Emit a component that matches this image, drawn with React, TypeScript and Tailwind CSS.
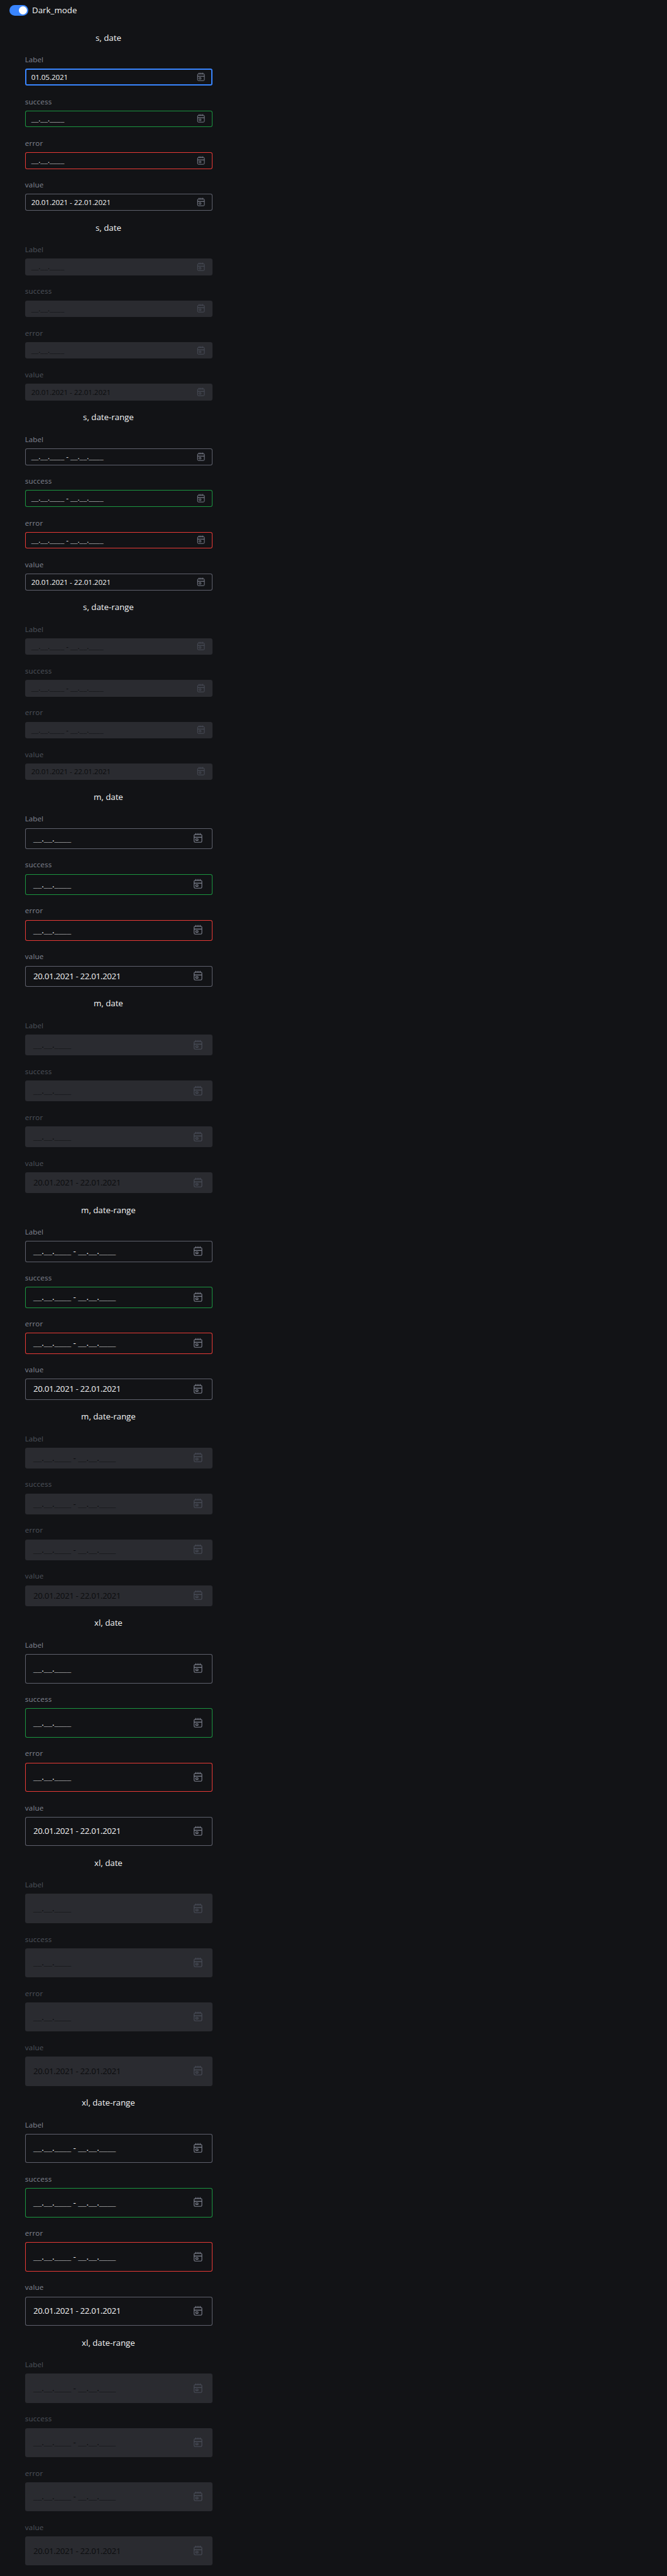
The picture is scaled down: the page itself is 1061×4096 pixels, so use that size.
import React from "react";

type Size = "s" | "m" | "xl";
type Kind = "date" | "date-range";
type Tone = "default" | "focus" | "success" | "error";

const sectionSize: Record<Size, string> = {
  s: "h-[301.82px]",
  m: "h-[328.35px]",
  xl: "h-[381.42px]",
};

const boxSize: Record<Size, string> = {
  s: "h-[26.54px] pl-[9.95px] pr-[9.53px] text-[11.605px]",
  m: "h-[33.172px] pl-[13.26px] pr-[13.26px] text-[13.2625px]",
  xl: "h-[46.438px] pl-[13.26px] pr-[13.26px] text-[13.2625px]",
};

const toneBorder: Record<Tone, string> = {
  default: "inset-ring inset-ring-[#5f616d]",
  focus: "inset-ring-2 inset-ring-[#3985ff]",
  success: "inset-ring inset-ring-[#1b9640]",
  error: "inset-ring inset-ring-[#e83a36]",
};

function CalendarIcon({ className }: { className: string }) {
  return (
    <svg viewBox="0 0 24 24" fill="none" stroke="currentColor" strokeWidth="1.35" className={className}>
      <rect x="4.6" y="4.6" width="14.8" height="15" rx="2" />
      <path d="M8 2.1v4M12 2.1v4M16 2.1v4" />
      <path d="M4.6 10h14.8" strokeWidth="1.6" />
      <rect x="7.9" y="13" width="4.2" height="3.2" rx="0.8" />
    </svg>
  );
}

function Blank({ n }: { n: number }) {
  return <span className="font-['Liberation_Serif',serif] opacity-70">{"_".repeat(n)}</span>;
}

function DateMask() {
  return (
    <>
      <Blank n={2} />.<Blank n={2} />.<Blank n={4} />
    </>
  );
}

function Field({
  label,
  size,
  kind,
  tone,
  value,
  disabled,
}: {
  label: string;
  size: Size;
  kind: Kind;
  tone: Tone;
  value?: string;
  disabled: boolean;
}) {
  const tracking = size === "s" ? "tracking-[-0.07px]" : "tracking-[-0.32px]";
  return (
    <div className="pb-[16.594px]">
      <div
        className={`h-[23.219px] text-[11.605px] leading-[18.4px] ${
          label === "Label" ? "tracking-[0.02px]" : "tracking-[0.2px]"
        } ${disabled ? "text-[#4f535d]" : "text-[#838794]"}`}
      >
        {label}
      </div>
      <div
        className={`flex items-center justify-between rounded-[3.3px] ${boxSize[size]} ${
          disabled ? "bg-[#2a2b30] text-[#0b0c0e]" : `text-[#f5f6f7] ${toneBorder[tone]}`
        }`}
      >
        <span className="whitespace-pre leading-none">
          {value ? (
            <span className={tracking}>{value}</span>
          ) : (
            <>
              <DateMask />
              {kind === "date-range" && (
                <>
                  {" - "}
                  <DateMask />
                </>
              )}
            </>
          )}
        </span>
        <CalendarIcon
          className={`shrink-0 ${size === "s" ? "size-[17.4px]" : "size-[19.894px]"} ${
            disabled ? "text-[#4a4e59]" : "text-[#7f8390]"
          }`}
        />
      </div>
    </div>
  );
}

function Section({ size, kind, disabled, focused }: { size: Size; kind: Kind; disabled: boolean; focused: boolean }) {
  const shared = { size, kind, disabled };
  return (
    <section className={sectionSize[size]}>
      <h2 className="h-[36.484px] w-[344.825px] text-center text-[13.2625px] leading-[20.4px] text-[#f5f6f7]">
        {size}, {kind}
      </h2>
      <div className="ml-[39.788px] w-[298.406px]">
        <Field {...shared} label="Label" tone={focused ? "focus" : "default"} value={focused ? "01.05.2021" : undefined} />
        <Field {...shared} label="success" tone="success" />
        <Field {...shared} label="error" tone="error" />
        <Field {...shared} label="value" tone="default" value="20.01.2021 - 22.01.2021" />
      </div>
    </section>
  );
}

const sizes: Size[] = ["s", "m", "xl"];
const kinds: Kind[] = ["date", "date-range"];

export default function App() {
  return (
    <main className="h-screen overflow-hidden bg-[#121316] font-['Open_Sans',sans-serif]">
      <header className="flex h-[49.75px] items-start gap-[6.3px] pt-[8.289px] pl-[14.92px]">
        <span className="flex h-[16.578px] w-[29.84px] items-center justify-end rounded-full bg-[#3985ff] pr-[1.66px]">
          <span className="size-[13.2625px] rounded-full bg-white" />
        </span>
        <span className="text-[13.2625px] leading-[17.4px] tracking-[0.05px] text-[#f5f6f7]">Dark_mode</span>
      </header>
      {sizes.map((size) =>
        kinds.map((kind) =>
          [false, true].map((disabled) => (
            <Section
              key={`${size}-${kind}-${disabled}`}
              size={size}
              kind={kind}
              disabled={disabled}
              focused={size === "s" && kind === "date" && !disabled}
            />
          )),
        ),
      )}
    </main>
  );
}
